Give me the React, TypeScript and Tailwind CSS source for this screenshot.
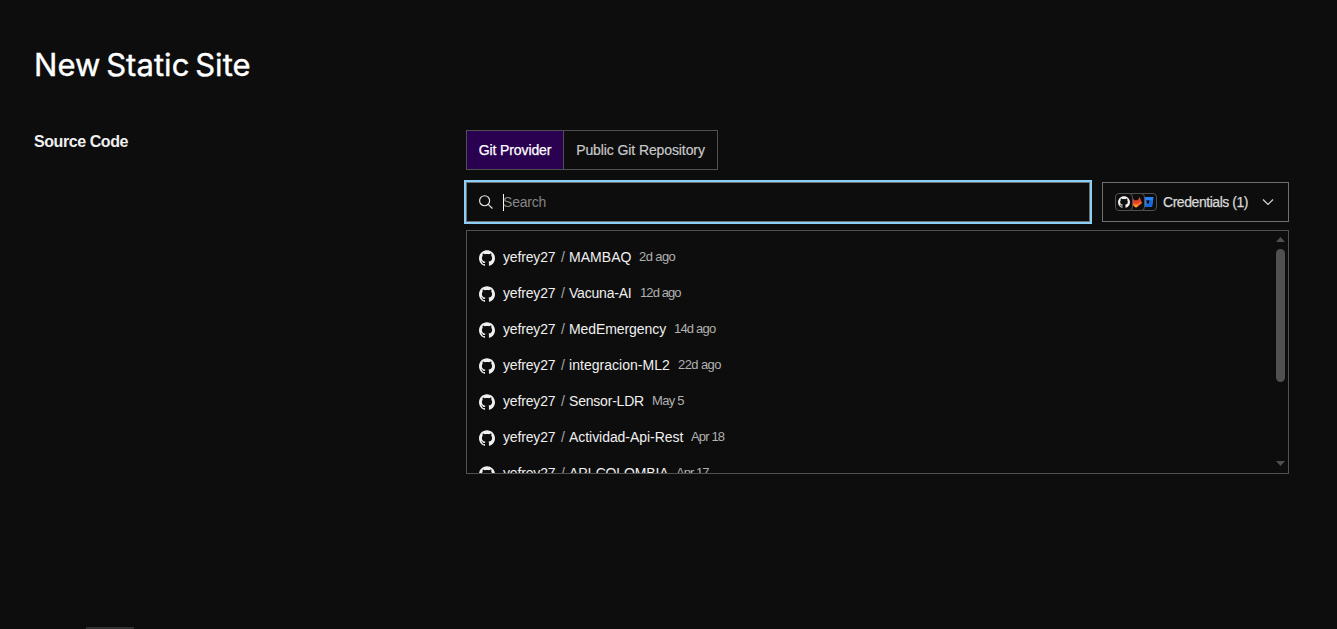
import React from 'react';
import { SiGithub } from 'react-icons/si';

const repos = [
  { name: 'MAMBAQ', updated: '2d ago', nameClass: 'w-[62px] tracking-[0.05px]', dateClass: 'tracking-[-0.6px]' },
  { name: 'Vacuna-AI', updated: '12d ago', nameClass: 'w-[63px] tracking-[-0.2px]', dateClass: 'tracking-[-0.9px]' },
  { name: 'MedEmergency', updated: '14d ago', nameClass: 'w-[97px] tracking-[-0.08px]', dateClass: 'tracking-[-0.8px]' },
  { name: 'integracion-ML2', updated: '22d ago', nameClass: 'w-[101px] tracking-[0.03px]', dateClass: 'tracking-[-0.6px]' },
  { name: 'Sensor-LDR', updated: 'May 5', nameClass: 'w-[75px] tracking-[-0.2px]', dateClass: 'tracking-[-0.7px]' },
  { name: 'Actividad-Api-Rest', updated: 'Apr 18', nameClass: 'w-[114px] tracking-[-0.05px]', dateClass: 'tracking-[-0.85px]' },
  { name: 'API-COLOMBIA', updated: 'Apr 17', nameClass: 'w-[99px] tracking-[-0.15px]', dateClass: 'tracking-[-0.95px]' },
];

function GitlabIcon() {
  return (
    <svg viewBox="0 0 24 24" className="h-3 w-3 shrink-0">
      <path fill="#e24329" d="M12 23 .5 14.5 4.5 1.5l3.8 7h7.4l3.8-7 4 13z" />
      <path fill="#fc6d26" d="M12 23 .5 14.5l.9-3.5L12 17l10.6-6 .9 3.5z" />
      <path fill="#fca326" d="m12 23-4-3L12 17l4 3z" />
    </svg>
  );
}

function BitbucketIcon() {
  return (
    <svg viewBox="0 0 24 24" className="h-3 w-3 shrink-0">
      <path fill="#2684ff" fillRule="evenodd" d="M1 2h22l-3 20H4zM8.5 8.5l1.2 7h4.6l1.2-7z" />
      <path fill="#1868db" d="M22 8.5h-6.5l-1.2 7H9.7L4 22h16z" />
    </svg>
  );
}

function ProviderBadges() {
  return (
    <div className="flex text-[#f0f0f0]">
      <span className="z-20 flex size-[18px] items-center justify-center rounded border border-[#505050] bg-[#0d0d0d]">
        <SiGithub className="size-3" />
      </span>
      <span className="z-10 -ml-1.5 flex size-[18px] items-center justify-center rounded border border-[#505050] bg-[#0d0d0d]">
        <GitlabIcon />
      </span>
      <span className="-ml-1.5 flex size-[18px] items-center justify-center rounded border border-[#505050] bg-[#0d0d0d]">
        <BitbucketIcon />
      </span>
    </div>
  );
}

export default function App() {
  return (
    <div className="flex h-[629px] flex-col overflow-hidden bg-[#0d0d0d] pl-[34px] pr-12 font-['Liberation_Sans',Arial,sans-serif] text-sm text-[#f0f0f0]">
      <h1 className="mt-[45px] h-10 whitespace-nowrap font-['Inter',sans-serif] text-[31px] leading-[40px] tracking-[0.05px] text-white [-webkit-text-stroke:0.4px] [word-spacing:-3px]">
        New Static Site
      </h1>

      <div className="mt-[45px] flex">
        <h2 className="w-[432px] shrink-0 text-base font-bold leading-[23px] tracking-[-0.43px]">Source Code</h2>

        <div className="min-w-0 flex-1">
          <div className="flex h-10 w-[252px] border border-[#505050] whitespace-nowrap">
            <button className="flex w-[97px] shrink-0 items-center justify-center border-r border-[#505050] bg-[#2a0050] tracking-[-0.1px] text-white [-webkit-text-stroke:0.25px]">
              Git Provider
            </button>
            <button className="flex flex-1 items-center justify-center tracking-[-0.1px] text-[#c8c8c8] [-webkit-text-stroke:0.2px]">
              Public Git Repository
            </button>
          </div>

          <div className="mt-3 flex gap-3">
            <div className="flex h-10 flex-1 items-center border border-[#707070] pl-[11px] outline-2 outline-[#8bd0f8]">
              <svg viewBox="0 0 16 16" className="size-4" fill="none" stroke="#e8e8e8" strokeWidth="1.15">
                <circle cx="6.6" cy="6.7" r="5" />
                <path d="m10.2 10.3 4.2 4.2" />
              </svg>
              <span className="ml-[9px] h-[17px] w-px bg-white" />
              <span className="-ml-px tracking-[-0.2px] text-[#858585]">Search</span>
            </div>

            <button className="flex h-10 w-[187px] shrink-0 items-center border border-[#707070] pl-3 text-[#d8d8d8]">
              <ProviderBadges />
              <span className="ml-1.5 w-[86px] whitespace-nowrap text-left tracking-[-0.45px] [-webkit-text-stroke:0.25px]">
                Credentials (1)
              </span>
              <svg viewBox="0 0 12 8" className="ml-[13px] h-2 w-3" fill="none" stroke="currentColor" strokeWidth="1.2">
                <path d="m1 1.5 5 5 5-5" />
              </svg>
            </button>
          </div>

          <div className="mt-2 flex h-[244px] border border-[#505050]">
            <ul className="h-full flex-1 overflow-hidden pt-2">
              {repos.map((repo) => (
                <li key={repo.name} className="flex h-9 items-center whitespace-nowrap pl-3">
                  <SiGithub className="mt-px size-4 shrink-0" />
                  <span className="ml-2 w-[53px] tracking-[-0.15px]">yefrey27</span>
                  <span className="ml-0.5 w-[11px] pl-[3px] text-[#a8a8a8]">/</span>
                  <span className={repo.nameClass}>{repo.name}</span>
                  <span className={`ml-2 text-[13px] leading-4 text-[#b0b0b0] ${repo.dateClass}`}>{repo.updated}</span>
                </li>
              ))}
            </ul>
            <div className="mr-[3px] flex w-[9px] flex-col items-center pb-[7px] pt-1.5">
              <svg viewBox="0 0 9 5" className="h-[5px] w-[9px]" fill="#505050">
                <path d="M4.5 0 9 5H0z" />
              </svg>
              <div className="mt-[7px] h-[133px] w-[9px] rounded-full bg-[#505050]" />
              <svg viewBox="0 0 9 5" className="mt-auto h-[5px] w-[9px]" fill="#505050">
                <path d="M0 0h9L4.5 5z" />
              </svg>
            </div>
          </div>
        </div>
      </div>

      <div className="ml-[52px] mt-auto h-0.5 w-12 shrink-0 bg-[#303030]" />
    </div>
  );
}
